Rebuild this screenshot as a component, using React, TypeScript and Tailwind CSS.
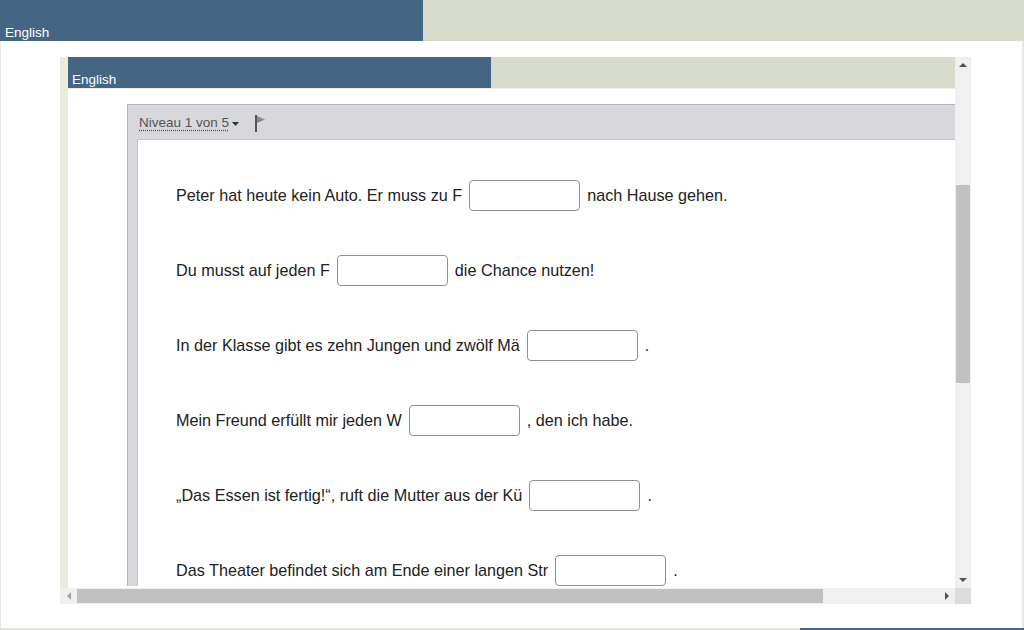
const sentences: { before: string; after: string }[] = [
  { before: 'Peter hat heute kein Auto. Er muss zu F', after: 'nach Hause gehen.' },
  { before: 'Du musst auf jeden F', after: 'die Chance nutzen!' },
  { before: 'In der Klasse gibt es zehn Jungen und zwölf Mä', after: '.' },
  { before: 'Mein Freund erfüllt mir jeden W', after: ', den ich habe.' },
  { before: '„Das Essen ist fertig!“, ruft die Mutter aus der Kü', after: '.' },
  { before: 'Das Theater befindet sich am Ende einer langen Str', after: '.' },
];

function Arrow({ dir, light }: { dir: 'up' | 'down' | 'left' | 'right'; light?: boolean }) {
  const points = {
    up: '0,6 4,2 8,6',
    down: '0,2 8,2 4,6',
    left: '6,0 6,8 2,4',
    right: '2,0 2,8 6,4',
  }[dir];
  return (
    <svg width="8" height="8" viewBox="0 0 8 8">
      <polygon points={points} fill={light ? '#a3a3a3' : '#505050'} />
    </svg>
  );
}

function Toolbar() {
  return (
    <div className="flex h-[34px] items-center pl-[2px] pt-[3px] text-[13.5px] text-[#555]">
      <span className="underline decoration-dotted decoration-[#555] underline-offset-2">Niveau 1 von 5</span>
      <svg width="10" height="8" viewBox="0 0 10 8" className="ml-[2px] mt-[1px]">
        <polygon points="1,2 8,2 4.5,6" fill="#333" />
      </svg>
      <svg width="14" height="18" viewBox="0 0 14 18" className="ml-[13px]">
        <rect x="1" y="0" width="2" height="17" fill="#555" />
        <polygon points="3,1 11,4.5 3,8" fill="#8a8a8a" />
      </svg>
    </div>
  );
}

function Exercise() {
  return (
    <div className="ml-[59px] mt-[15px] flex min-w-[900px] flex-col border-l border-t border-[#b5b4bc] bg-[#d8d7dc] pl-[9px]">
      <Toolbar />
      <div className="flex flex-col gap-[44px] border-l border-t border-[#c4c3ca] bg-white pl-[38px] pt-[40px] text-[16.2px] text-[#222]">
        {sentences.map((s) => (
          <div key={s.before} className="flex h-[31px] items-center whitespace-nowrap">
            <span>{s.before}</span>
            <span className="mx-[7px] h-[31px] w-[111px] shrink-0 rounded-[4px] border border-[#8f8f8f] bg-white" />
            <span>{s.after}</span>
          </div>
        ))}
      </div>
    </div>
  );
}

export default function App() {
  return (
    <div className="flex h-[630px] w-[1024px] flex-col overflow-hidden bg-white font-['Liberation_Sans',Arial,sans-serif]">
      {/* top language bar */}
      <div className="flex h-[41px] shrink-0">
        <div className="flex w-[423px] items-end bg-[#456585] pl-[5px] text-[13.5px] leading-[16px] text-white">English</div>
        <div className="flex-1 bg-[#d7dbcb]" />
      </div>

      <div className="flex-1 border-l border-r-2 border-[#e8eae2] pl-[59px] pt-[16px]">
        <div className="flex h-[547px] w-[911px] flex-col">
          <div className="flex h-[531px]">
            <div className="flex w-[895px] overflow-hidden">
              <div className="w-[8px] shrink-0 bg-[#e8ebdd]" />
              <div className="flex min-w-0 flex-1 flex-col">
                <div className="flex h-[32px] shrink-0 border-b border-[#ecece6]">
                  <div className="flex w-[423px] items-end bg-[#456585] pl-[4px] text-[13.5px] leading-[16px] text-white">English</div>
                  <div className="flex-1 bg-[#d7dbcb]" />
                </div>
                <Exercise />
              </div>
            </div>
            {/* vertical scrollbar */}
            <div className="flex w-[16px] flex-col bg-[#f0f0f0]">
              <div className="flex h-[16px] items-center justify-center">
                <Arrow dir="up" />
              </div>
              <div className="mx-[1px] mt-[112px] h-[198px] bg-[#c1c1c1]" />
              <div className="flex-1" />
              <div className="flex h-[17px] items-center justify-center">
                <Arrow dir="down" />
              </div>
            </div>
          </div>
          {/* horizontal scrollbar */}
          <div className="flex h-[16px]">
            <div className="flex w-[895px] items-center bg-[#f0f0f0]">
              <div className="flex w-[17px] justify-center">
                <Arrow dir="left" light />
              </div>
              <div className="h-[14px] w-[746px] bg-[#c1c1c1]" />
              <div className="flex-1" />
              <div className="flex w-[17px] justify-center">
                <Arrow dir="right" />
              </div>
            </div>
            <div className="w-[16px] bg-[#dcdcdc]" />
          </div>
        </div>
      </div>

      <div className="flex h-[2px] shrink-0">
        <div className="flex-1 bg-[#e3e5dc]" />
        <div className="w-[224px] bg-[#456585]" />
      </div>
    </div>
  );
}
